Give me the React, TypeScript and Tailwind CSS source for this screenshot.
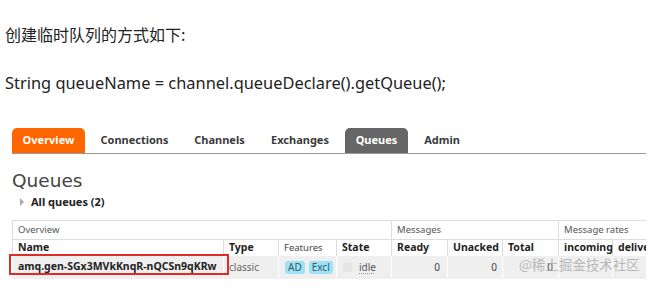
import React from "react";

const TABS = [
  { label: "Overview", w: "w-[73px]", tone: "orange" },
  { label: "Connections", w: "w-[89px]", tone: "plain" },
  { label: "Channels", w: "w-[71px]", tone: "plain" },
  { label: "Exchanges", w: "w-[80px]", tone: "plain" },
  { label: "Queues", w: "w-[63px]", tone: "gray" },
  { label: "Admin", w: "w-[58px]", tone: "plain" },
];

const ui = { fontFamily: '"Noto Sans", "DejaVu Sans", sans-serif' };

function Tab({ label, w, tone }: { label: string; w: string; tone: string }) {
  const look =
    tone === "orange"
      ? "bg-[#ff6600] text-white"
      : tone === "gray"
        ? "bg-[#666666] text-white"
        : "text-[#3a3a3a]";
  return (
    <div
      className={`${w} ${look} flex h-[25px] items-center justify-center rounded-t-[5px] text-[11px] font-bold`}
    >
      {label}
    </div>
  );
}

function Pill({ children }: { children: React.ReactNode }) {
  return (
    <span className="inline-flex h-[13px] items-center rounded-[3px] bg-[#9fe2f6] px-[3px] text-[10px] leading-none text-[#35576a]">
      {children}
    </span>
  );
}

export default function App() {
  const th = "border-l border-t border-[#dddddd] px-[5px] text-left align-middle";
  const td = "border-l border-white px-[5px] align-middle";

  return (
    <div className="relative h-[288px] w-[654px] overflow-hidden bg-white">
      <p
        className="mt-[22px] pl-[5px] text-[16px] leading-[24px] text-[#222]"
        style={{ fontFamily: '"Noto Sans CJK SC", "Noto Sans", sans-serif' }}
      >
        创建临时队列的方式如下:
      </p>
      <p
        className="mt-[25px] pl-[5px] text-[16.4px] leading-[24px] text-[#222]"
        style={{ fontFamily: '"Noto Sans", sans-serif' }}
      >
        String queueName = channel.queueDeclare().getQueue();
      </p>

      <div className="ml-[12px] w-[634px]" style={ui}>
        <div className="mt-[33px] flex gap-[5px] border-b border-[#9a9a9a]">
          {TABS.map((t) => (
            <Tab key={t.label} {...t} />
          ))}
        </div>

        <h1
          className="mt-[17px] text-[18.5px] leading-[20px] text-[#444]"
          style={{ fontFamily: '"DejaVu Sans", sans-serif' }}
        >
          Queues
        </h1>
        <div className="mt-[4px] flex h-[14px] items-center">
          <span className="ml-[8px] h-0 w-0 border-y-[4px] border-l-[4px] border-y-transparent border-l-[#a8a8a8]" />
          <span className="ml-[7px] text-[11px] font-bold text-[#222]">All queues (2)</span>
        </div>

        <div className="relative mt-[11px]">
          <div className="overflow-hidden">
            <table className="w-[670px] table-fixed border-collapse text-[#333]">
              <colgroup>
                <col className="w-[211px]" />
                <col className="w-[55px]" />
                <col className="w-[58px]" />
                <col className="w-[55px]" />
                <col className="w-[56px]" />
                <col className="w-[55px]" />
                <col className="w-[56px]" />
                <col className="w-[54px]" />
                <col className="w-[70px]" />
              </colgroup>
              <thead>
                <tr className="h-[19px] text-[9.5px] font-normal text-[#555]">
                  <th colSpan={4} className={`${th} font-normal`}>
                    Overview
                  </th>
                  <th colSpan={3} className={`${th} font-normal`}>
                    Messages
                  </th>
                  <th colSpan={2} className={`${th} font-normal`}>
                    Message rates
                  </th>
                </tr>
                <tr className="h-[15px] text-[10.5px] font-bold text-[#222]">
                  <th className={th}>Name</th>
                  <th className={th}>Type</th>
                  <th className={`${th} font-normal text-[9.5px] text-[#444]`}>Features</th>
                  <th className={th}>State</th>
                  <th className={th}>Ready</th>
                  <th className={th}>Unacked</th>
                  <th className={th}>Total</th>
                  <th className={th}>incoming</th>
                  <th className={`${th} whitespace-nowrap`}>deliver / get</th>
                </tr>
              </thead>
              <tbody>
                <tr className="h-[23px] bg-[#efefef] text-[9.5px]">
                  <td className={`${td} whitespace-nowrap text-[10.5px] font-bold text-[#222]`}>
                    amq.gen-SGx3MVkKnqR-nQCSn9qKRw
                  </td>
                  <td className={`${td} text-[10px] text-[#666]`}>classic</td>
                  <td className={td}>
                    <div className="flex gap-[4px] pl-[1px]">
                      <Pill>AD</Pill>
                      <Pill>Excl</Pill>
                    </div>
                  </td>
                  <td className={td}>
                    <div className="flex items-center gap-[7px] pl-[1px]">
                      <span className="h-[9px] w-[9px] bg-[#e4e4e4]" />
                      <span className="text-[10px] text-[#555] underline decoration-[#999] decoration-dotted underline-offset-2">
                        idle
                      </span>
                    </div>
                  </td>
                  <td className={`${td} pr-[7px] text-right text-[10px] text-[#444]`}>0</td>
                  <td className={`${td} pr-[5px] text-right text-[10px] text-[#444]`}>0</td>
                  <td className={`${td} pr-[5px] text-right text-[10px] text-[#444]`}>0</td>
                  <td className={td} />
                  <td className={td} />
                </tr>
              </tbody>
            </table>
          </div>

          <div className="pointer-events-none absolute left-[-3px] top-[34px] h-[21px] w-[220px] border-2 border-[#e02b2b]" />
        </div>
      </div>

      <span
        className="pointer-events-none absolute left-[519px] top-[255px] text-[13.5px] leading-[18px] text-[#a9a9a9]/80"
        style={{ fontFamily: '"Noto Sans CJK SC", sans-serif' }}
      >
        @稀土掘金技术社区
      </span>
    </div>
  );
}
